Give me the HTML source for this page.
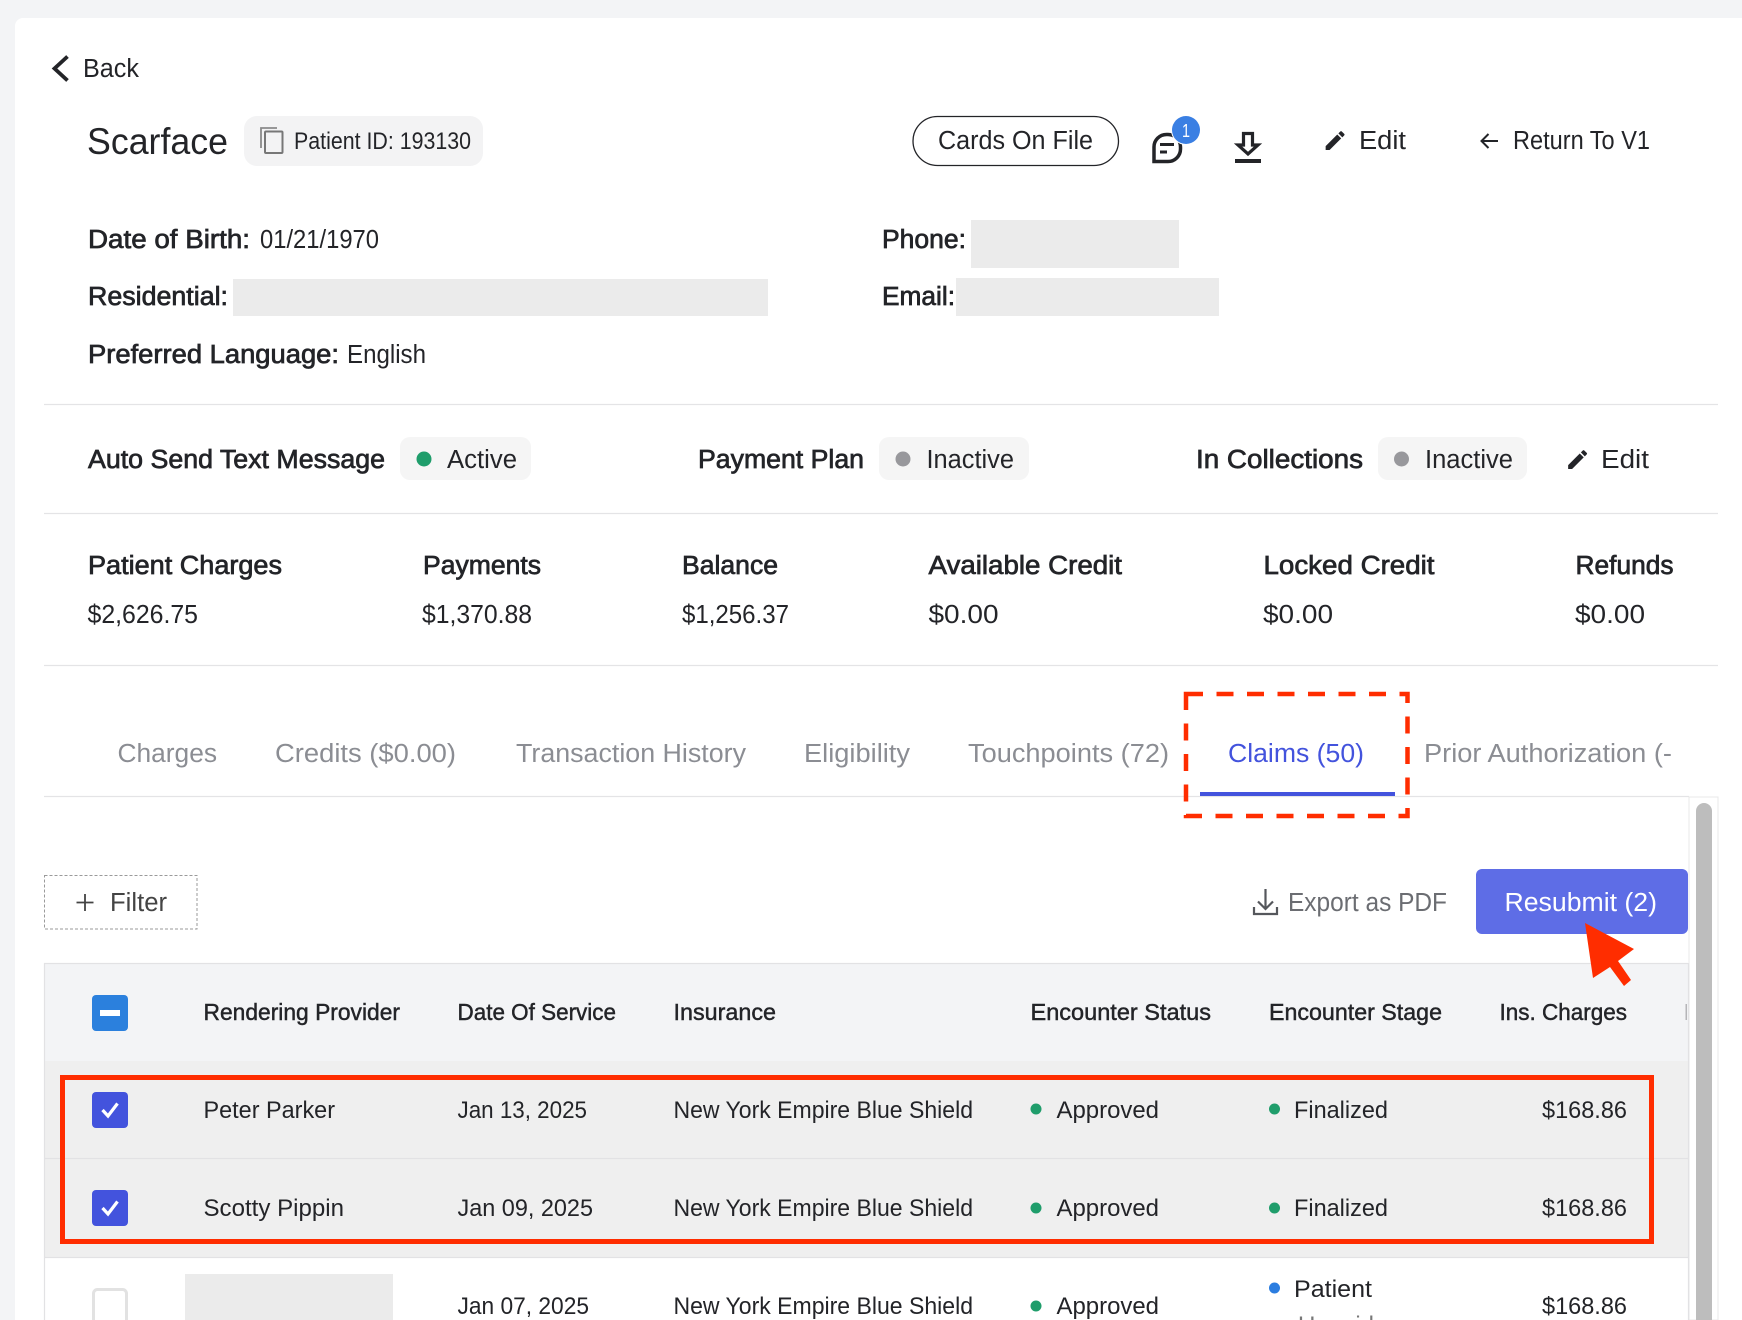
<!DOCTYPE html>
<html><head><meta charset="utf-8"><title>Scarface</title>
<style>
html,body{margin:0;padding:0;width:1742px;height:1320px;overflow:hidden;background:#f3f4f6}
svg{display:block;font-family:"Liberation Sans",sans-serif}
text{font-size:25.5px;fill:#232428}
.b{stroke:#232428;stroke-width:.7px}
.t{fill:#8b8d93}
.h{font-size:23.5px;stroke:#232428;stroke-width:.45px}
.r{font-size:24.5px}
</style></head><body>
<svg width="1742" height="1320" viewBox="0 0 1742 1320" xmlns="http://www.w3.org/2000/svg">
<rect x="15" y="18" width="1760" height="1340" rx="8" fill="#fff"/>

<path d="M67.500 56.500 L54.500 68.500 L67.500 80.500" fill="none" stroke="#232428" stroke-width="3.800"/>
<text x="83" y="77" textLength="56" lengthAdjust="spacingAndGlyphs">Back</text>
<text x="87" y="154" style="font-size:37.500px" textLength="141" lengthAdjust="spacingAndGlyphs">Scarface</text>
<rect x="244" y="116" width="239" height="50" rx="13" fill="#f3f3f4"/>
<path d="M261 148 V128 H277" fill="none" stroke="#8a8a8a" stroke-width="1.800"/>
<rect x="265" y="131.500" width="17.500" height="21.500" rx="1" fill="#f3f3f4" stroke="#777" stroke-width="2"/>
<text x="294" y="149" style="font-size:24px" textLength="177" lengthAdjust="spacingAndGlyphs">Patient ID: 193130</text>

<rect x="913" y="116.500" width="205.500" height="49" rx="24.500" fill="#fff" stroke="#232428" stroke-width="1.300"/>
<text x="938" y="149" textLength="155" lengthAdjust="spacingAndGlyphs">Cards On File</text>
<path d="M1154 161.500 V147 A12.500 12.500 0 0 1 1166.500 134.500 H1168 A12.500 12.500 0 0 1 1180.500 147 V149 A12.500 12.500 0 0 1 1168 161.500 Z" fill="#fff" stroke="#232428" stroke-width="3.500"/>
<path d="M1160 144.500 H1174 M1160 152 H1167" stroke="#232428" stroke-width="3" fill="none"/>
<circle cx="1186" cy="130" r="15" fill="#fff"/>
<circle cx="1186" cy="130" r="14" fill="#3a7fe3"/>
<text x="1182" y="137" style="font-size:18px;fill:#fff" textLength="8" lengthAdjust="spacingAndGlyphs">1</text>
<path d="M1243.500 133.500 H1252.500 V145 H1258 L1248 154 L1238 145 H1243.500 Z" fill="#fff" stroke="#232428" stroke-width="3.200"/>
<rect x="1235" y="159" width="26" height="4" fill="#232428"/>
<path transform="translate(1322.500 128) scale(1.050)" fill="#232428" d="M3 17.250V21h3.750L17.810 9.940l-3.750-3.750L3 17.250zM20.710 7.040a1 1 0 0 0 0-1.410l-2.340-2.340a1 1 0 0 0-1.410 0l-1.830 1.830 3.750 3.750 1.830-1.830z"/>
<text x="1359" y="149" textLength="47" lengthAdjust="spacingAndGlyphs">Edit</text>
<path d="M1498 141 H1482 M1488.500 134 L1481.500 141 L1488.500 148" fill="none" stroke="#232428" stroke-width="2"/>
<text x="1513" y="149" textLength="137" lengthAdjust="spacingAndGlyphs">Return To V1</text>

<text class="b" x="88" y="248" textLength="162" lengthAdjust="spacingAndGlyphs">Date of Birth:</text>
<text x="260" y="248" textLength="119" lengthAdjust="spacingAndGlyphs">01/21/1970</text>
<text class="b" x="88" y="305" textLength="140" lengthAdjust="spacingAndGlyphs">Residential:</text>
<rect x="233" y="279" width="535" height="37" fill="#ebebeb"/>
<text class="b" x="88" y="363" textLength="251" lengthAdjust="spacingAndGlyphs">Preferred Language:</text>
<text x="347" y="363" textLength="79" lengthAdjust="spacingAndGlyphs">English</text>
<text class="b" x="882" y="248" textLength="84" lengthAdjust="spacingAndGlyphs">Phone:</text>
<rect x="971" y="220" width="208" height="48" fill="#ebebeb"/>
<text class="b" x="882" y="305" textLength="73" lengthAdjust="spacingAndGlyphs">Email:</text>
<rect x="956" y="278" width="263" height="38" fill="#ebebeb"/>

<path d="M44 404.500 H1718 M44 513.500 H1718 M44 665.500 H1718 M44 796.500 H1689" stroke="#e4e4e6" stroke-width="1.200" fill="none"/>

<text class="b" x="88" y="468" textLength="297" lengthAdjust="spacingAndGlyphs">Auto Send Text Message</text>
<rect x="400" y="437" width="131" height="43" rx="10" fill="#f5f5f5"/>
<circle cx="424" cy="459" r="7.500" fill="#1f9d6b"/>
<text x="447" y="468" textLength="70" lengthAdjust="spacingAndGlyphs">Active</text>
<text class="b" x="698" y="468" textLength="166" lengthAdjust="spacingAndGlyphs">Payment Plan</text>
<rect x="879" y="437" width="150" height="43" rx="10" fill="#f5f5f5"/>
<circle cx="903" cy="459" r="7.500" fill="#98989c"/>
<text x="926.500" y="468" textLength="87.500" lengthAdjust="spacingAndGlyphs">Inactive</text>
<text class="b" x="1196" y="468" textLength="167" lengthAdjust="spacingAndGlyphs">In Collections</text>
<rect x="1378" y="437" width="149" height="43" rx="10" fill="#f5f5f5"/>
<circle cx="1401.500" cy="459" r="7.500" fill="#98989c"/>
<text x="1425" y="468" textLength="88" lengthAdjust="spacingAndGlyphs">Inactive</text>
<path transform="translate(1565 447) scale(1.050)" fill="#232428" d="M3 17.250V21h3.750L17.810 9.940l-3.750-3.750L3 17.250zM20.710 7.040a1 1 0 0 0 0-1.410l-2.340-2.340a1 1 0 0 0-1.410 0l-1.830 1.830 3.750 3.750 1.830-1.830z"/>
<text x="1601" y="468" textLength="48" lengthAdjust="spacingAndGlyphs">Edit</text>

<text class="b" x="88" y="574" textLength="194" lengthAdjust="spacingAndGlyphs">Patient Charges</text>
<text x="87.500" y="623" textLength="110.500" lengthAdjust="spacingAndGlyphs">$2,626.75</text>
<text class="b" x="423" y="574" textLength="118" lengthAdjust="spacingAndGlyphs">Payments</text>
<text x="422" y="623" textLength="110" lengthAdjust="spacingAndGlyphs">$1,370.88</text>
<text class="b" x="682" y="574" textLength="96" lengthAdjust="spacingAndGlyphs">Balance</text>
<text x="682" y="623" textLength="107" lengthAdjust="spacingAndGlyphs">$1,256.37</text>
<text class="b" x="928.500" y="574" textLength="193.500" lengthAdjust="spacingAndGlyphs">Available Credit</text>
<text x="928.500" y="623" textLength="70" lengthAdjust="spacingAndGlyphs">$0.00</text>
<text class="b" x="1263.500" y="574" textLength="171" lengthAdjust="spacingAndGlyphs">Locked Credit</text>
<text x="1263" y="623" textLength="70" lengthAdjust="spacingAndGlyphs">$0.00</text>
<text class="b" x="1575.500" y="574" textLength="98" lengthAdjust="spacingAndGlyphs">Refunds</text>
<text x="1575" y="623" textLength="70" lengthAdjust="spacingAndGlyphs">$0.00</text>

<text class="t" x="117.500" y="762" textLength="99.500" lengthAdjust="spacingAndGlyphs">Charges</text>
<text class="t" x="275" y="762" textLength="181" lengthAdjust="spacingAndGlyphs">Credits ($0.00)</text>
<text class="t" x="516" y="762" textLength="230" lengthAdjust="spacingAndGlyphs">Transaction History</text>
<text class="t" x="804" y="762" textLength="106" lengthAdjust="spacingAndGlyphs">Eligibility</text>
<text class="t" x="968" y="762" textLength="201" lengthAdjust="spacingAndGlyphs">Touchpoints (72)</text>
<text x="1228" y="762" style="fill:#4353dd" textLength="136" lengthAdjust="spacingAndGlyphs">Claims (50)</text>
<text class="t" x="1424" y="762" textLength="248" lengthAdjust="spacingAndGlyphs">Prior Authorization (-</text>
<rect x="1200" y="792" width="195" height="4" fill="#4353dd"/>
<rect x="1186" y="694" width="221.500" height="122" fill="none" stroke="#ff2d00" stroke-width="4.500" stroke-dasharray="17 13.500"/>

<rect x="1689" y="797" width="29" height="523" fill="#fff" stroke="#e8e8e8"/>
<rect x="1696" y="803" width="16" height="530" rx="8" fill="#bdbdbd"/>

<rect x="44.500" y="875.500" width="152.500" height="53.500" fill="#fff" stroke="#9a9a9a" stroke-dasharray="3 2"/>
<path d="M85 894 V911 M76.500 902.500 H93.500" stroke="#444" stroke-width="1.800" fill="none"/>
<text x="110" y="911" style="fill:#444" textLength="57" lengthAdjust="spacingAndGlyphs">Filter</text>
<path d="M1265.500 889 V909 M1258 901.500 L1265.500 909 L1273 901.500 M1254 907 V914 H1277 V907" fill="none" stroke="#55575c" stroke-width="2.200"/>
<text x="1288" y="911" style="fill:#6b6d72" textLength="159" lengthAdjust="spacingAndGlyphs">Export as PDF</text>
<rect x="1476" y="869" width="212" height="65" rx="6" fill="#5e6de6"/>
<text x="1504.500" y="911" style="fill:#fff" textLength="152.500" lengthAdjust="spacingAndGlyphs">Resubmit (2)</text>

<rect x="44" y="963" width="1644" height="98" fill="#f3f4f6"/>
<rect x="44" y="1061" width="1644" height="196" fill="#efefef"/>
<rect x="44" y="1257" width="1644" height="63" fill="#fff"/>
<path d="M44 963.500 H1688 M44 1158.500 H1688 M44 1257.500 H1688 M44.500 963 V1320 M1688.500 963 V1320" stroke="#e2e2e4" stroke-width="1.200" fill="none"/>

<rect x="92" y="995" width="36" height="36" rx="4" fill="#2b80dd"/>
<rect x="100" y="1010" width="20" height="6" fill="#fff"/>
<text class="h" x="203.500" y="1020" textLength="196.500" lengthAdjust="spacingAndGlyphs">Rendering Provider</text>
<text class="h" x="457.500" y="1020" textLength="158.500" lengthAdjust="spacingAndGlyphs">Date Of Service</text>
<text class="h" x="673.500" y="1020" textLength="102.500" lengthAdjust="spacingAndGlyphs">Insurance</text>
<text class="h" x="1030.500" y="1020" textLength="180.500" lengthAdjust="spacingAndGlyphs">Encounter Status</text>
<text class="h" x="1269" y="1020" textLength="173" lengthAdjust="spacingAndGlyphs">Encounter Stage</text>
<text class="h" x="1499.500" y="1020" textLength="127.500" lengthAdjust="spacingAndGlyphs">Ins. Charges</text>
<rect x="1685.500" y="1004" width="1.500" height="16" fill="#b5b5b8"/>

<rect x="92" y="1092" width="36" height="36" rx="4" fill="#4353dd"/>
<path d="M102.500 1110 L108 1116 L117.500 1103.500" fill="none" stroke="#fff" stroke-width="3.200"/>
<text class="r" x="203.500" y="1118" textLength="131.500" lengthAdjust="spacingAndGlyphs">Peter Parker</text>
<text class="r" x="457.500" y="1118" textLength="129.500" lengthAdjust="spacingAndGlyphs">Jan 13, 2025</text>
<text class="r" x="673.500" y="1118" textLength="299.500" lengthAdjust="spacingAndGlyphs">New York Empire Blue Shield</text>
<circle cx="1036" cy="1109" r="5.500" fill="#1f9d6b"/>
<text class="r" x="1056.500" y="1118" textLength="102.500" lengthAdjust="spacingAndGlyphs">Approved</text>
<circle cx="1274.500" cy="1109" r="5.500" fill="#1f9d6b"/>
<text class="r" x="1294" y="1118" textLength="94" lengthAdjust="spacingAndGlyphs">Finalized</text>
<text class="r" x="1542" y="1118" textLength="85" lengthAdjust="spacingAndGlyphs">$168.86</text>

<rect x="92" y="1190" width="36" height="36" rx="4" fill="#4353dd"/>
<path d="M102.500 1208 L108 1214 L117.500 1201.500" fill="none" stroke="#fff" stroke-width="3.200"/>
<text class="r" x="203.500" y="1216" textLength="140.500" lengthAdjust="spacingAndGlyphs">Scotty Pippin</text>
<text class="r" x="457.500" y="1216" textLength="135.500" lengthAdjust="spacingAndGlyphs">Jan 09, 2025</text>
<text class="r" x="673.500" y="1216" textLength="299.500" lengthAdjust="spacingAndGlyphs">New York Empire Blue Shield</text>
<circle cx="1036" cy="1208" r="5.500" fill="#1f9d6b"/>
<text class="r" x="1056.500" y="1216" textLength="102.500" lengthAdjust="spacingAndGlyphs">Approved</text>
<circle cx="1274.500" cy="1208" r="5.500" fill="#1f9d6b"/>
<text class="r" x="1294" y="1216" textLength="94" lengthAdjust="spacingAndGlyphs">Finalized</text>
<text class="r" x="1542" y="1216" textLength="85" lengthAdjust="spacingAndGlyphs">$168.86</text>

<rect x="62.500" y="1077.500" width="1589" height="164" fill="none" stroke="#ff2d00" stroke-width="5"/>

<rect x="93.500" y="1289.500" width="33" height="36" rx="4" fill="#fff" stroke="#e2e2e2" stroke-width="3"/>
<rect x="185" y="1274" width="208" height="46" fill="#ebebeb"/>
<text class="r" x="457.500" y="1314" textLength="131.500" lengthAdjust="spacingAndGlyphs">Jan 07, 2025</text>
<text class="r" x="673.500" y="1314" textLength="299.500" lengthAdjust="spacingAndGlyphs">New York Empire Blue Shield</text>
<circle cx="1036" cy="1306" r="5.500" fill="#1f9d6b"/>
<text class="r" x="1056.500" y="1314" textLength="102.500" lengthAdjust="spacingAndGlyphs">Approved</text>
<circle cx="1274.500" cy="1288" r="5.500" fill="#2b7de0"/>
<text class="r" x="1294" y="1297" textLength="78" lengthAdjust="spacingAndGlyphs">Patient</text>
<text class="r" x="1298" y="1333" style="fill:#777" textLength="76" lengthAdjust="spacingAndGlyphs">Unpaid</text>
<text class="r" x="1542" y="1314" textLength="85" lengthAdjust="spacingAndGlyphs">$168.86</text>

<path d="M1585 923 L1634 949 L1618 961 L1631 980 L1624 986 L1610 967 L1593 978 Z" fill="#ff2d00"/>
</svg>
</body></html>
